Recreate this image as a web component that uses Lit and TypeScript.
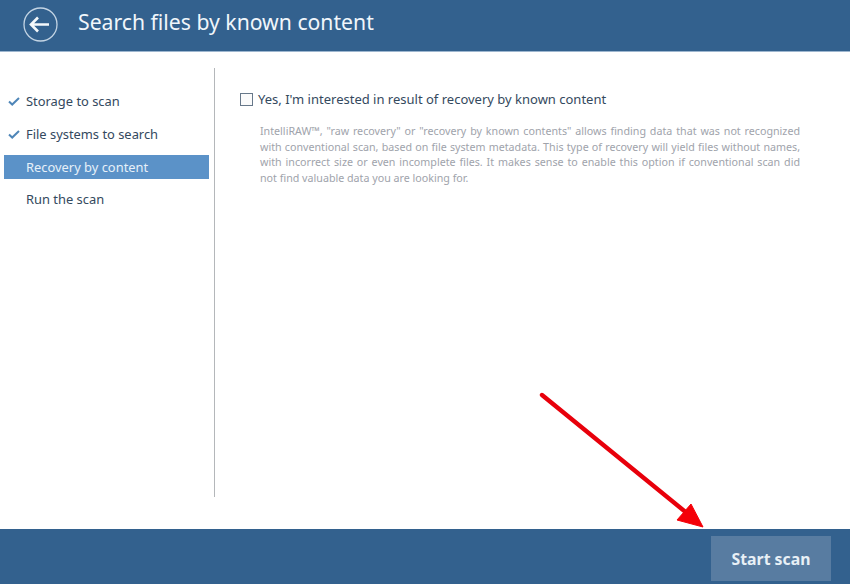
import {LitElement, html, css} from 'lit';
import {customElement} from 'lit/decorators.js';

const STEPS = [
  {label: 'Storage to scan', done: true},
  {label: 'File systems to search', done: true},
  {label: 'Recovery by content', active: true},
  {label: 'Run the scan'},
];

@customElement('app-root')
export class AppRoot extends LitElement {
  static override styles = css`
    :host {
      display: flex;
      flex-direction: column;
      position: relative;
      width: 850px;
      height: 584px;
      overflow: hidden;
      background: #fff;
      font-family: 'Noto Sans', 'Open Sans', sans-serif;
    }

    .header {
      height: 51px;
      flex: none;
      box-sizing: content-box;
      display: flex;
      align-items: flex-start;
      gap: 20px;
      padding-left: 23px;
      background: #33618e;
      border-bottom: 1px solid #9db6cf;
      color: #f0f6fb;
    }

    .back {
      display: block;
      width: 35px;
      height: 35px;
      margin-top: 6.5px;
    }

    .title {
      font-size: 21.2px;
      line-height: 28px;
      margin-top: 8px;
    }

    .body {
      flex: 1;
      display: flex;
      padding: 16px 0 32px;
      min-height: 0;
    }

    .sidebar {
      width: 215px;
      flex: none;
      box-sizing: border-box;
      border-right: 1px solid #b4b7ba;
      padding: 21.4px 5px 0 4px;
      display: flex;
      flex-direction: column;
      gap: 8.6px;
    }

    .step {
      height: 24px;
      display: flex;
      align-items: center;
      position: relative;
      padding-left: 22px;
      font-size: 12.9px;
      color: #34495e;
    }

    .step.active {
      background: #5b92c8;
      color: #e6f0f9;
    }

    .check {
      position: absolute;
      left: 4px;
      top: 8px;
      width: 12px;
      height: 9px;
    }

    .content {
      flex: 1;
      padding: 20px 50px 0 25px;
    }

    .option {
      display: flex;
      align-items: center;
      gap: 5px;
      height: 22px;
      font-size: 13px;
      color: #34495e;
    }

    .box {
      width: 11px;
      height: 11px;
      flex: none;
      border: 1px solid #67788a;
      background: #fbfbfb;
    }

    .description {
      margin: 14px 0 0 20px;
      font-size: 10.7px;
      line-height: 15.5px;
      color: #a0a3ab;
      text-align: justify;
    }

    .footer {
      height: 55px;
      flex: none;
      display: flex;
      justify-content: flex-end;
      align-items: flex-start;
      padding: 7px 19px 0 0;
      box-sizing: border-box;
      background: #33618e;
    }

    .start {
      width: 120px;
      height: 45px;
      border: none;
      padding: 0;
      background: #587ca1;
      color: #e8f0f6;
      font: 700 15.8px 'Noto Sans', 'Open Sans', sans-serif;
    }

    .arrow {
      position: absolute;
      left: 535px;
      top: 388px;
      width: 175px;
      height: 145px;
      pointer-events: none;
    }
  `;

  override render() {
    return html`
      <div class="header">
        <svg class="back" viewBox="0 0 35 35" fill="none">
          <circle cx="17.5" cy="17.5" r="16.5" stroke="#c3d4e4" stroke-width="1.3" />
          <path d="M8 17.5H26M15 10.5L8 17.5L15 24.5" stroke="#f4f8fb" stroke-width="2.6" />
        </svg>
        <div class="title">Search files by known content</div>
      </div>
      <div class="body">
        <div class="sidebar">
          ${STEPS.map(
            (s) => html`
              <div class="step ${s.active ? 'active' : ''}">
                ${s.done
                  ? html`<svg class="check" viewBox="0 0 12 9" fill="none">
                      <path d="M1 4.5L4.2 7.5L11 1" stroke="#4f86b8" stroke-width="2" />
                    </svg>`
                  : ''}
                ${s.label}
              </div>
            `,
          )}
        </div>
        <div class="content">
          <div class="option">
            <span class="box"></span>
            <span>Yes, I'm interested in result of recovery by known content</span>
          </div>
          <p class="description">
            IntelliRAW™, "raw recovery" or "recovery by known contents" allows finding data that
            was not recognized with conventional scan, based on file system metadata. This type of
            recovery will yield files without names, with incorrect size or even incomplete files.
            It makes sense to enable this option if conventional scan did not find valuable data
            you are looking for.
          </p>
        </div>
      </div>
      <div class="footer"><button class="start">Start scan</button></div>
      <svg class="arrow" viewBox="535 388 175 145" fill="none">
        <path d="M542 395L688 514" stroke="#e8000b" stroke-width="4.4" stroke-linecap="round" />
        <path d="M703 527L677 520L691 504Z" fill="#f40008" stroke="#f40008" />
      </svg>
    `;
  }
}
